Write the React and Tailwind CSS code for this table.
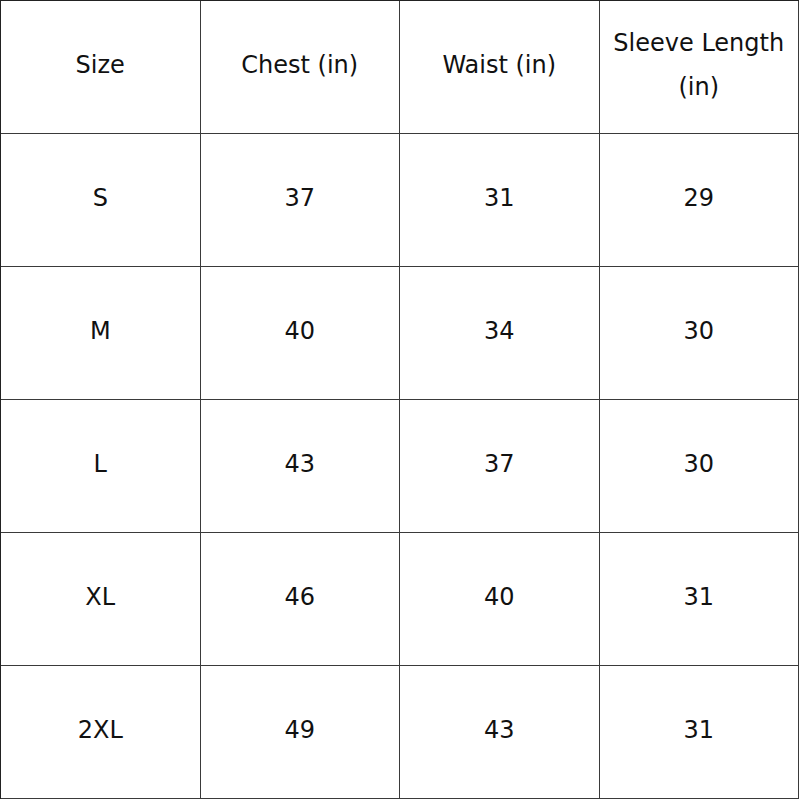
import React from "react";

const headers = ["Size", "Chest (in)", "Waist (in)", "Sleeve Length (in)"];

const rows = [
  ["S", "37", "31", "29"],
  ["M", "40", "34", "30"],
  ["L", "43", "37", "30"],
  ["XL", "46", "40", "31"],
  ["2XL", "49", "43", "31"],
];

const Cell = ({ children }) => (
  <div className="flex items-center justify-center border-r border-b border-[#3a3a3a] px-3 pb-[5px] text-center text-[24px] leading-[44px] text-[#111]">
    {children}
  </div>
);

const App = () => {
  return (
    <div className="h-[800px] w-[800px] bg-white">
      <div
        className="grid h-[799px] w-[799px] grid-cols-4 grid-rows-6 border-l border-t border-[#222]"
        style={{ fontFamily: '"DejaVu Sans", sans-serif' }}
      >
        {headers.map((h) => (
          <Cell key={h}>{h}</Cell>
        ))}
        {rows.map((row) =>
          row.map((value, i) => <Cell key={row[0] + i}>{value}</Cell>)
        )}
      </div>
    </div>
  );
};

export default App;
